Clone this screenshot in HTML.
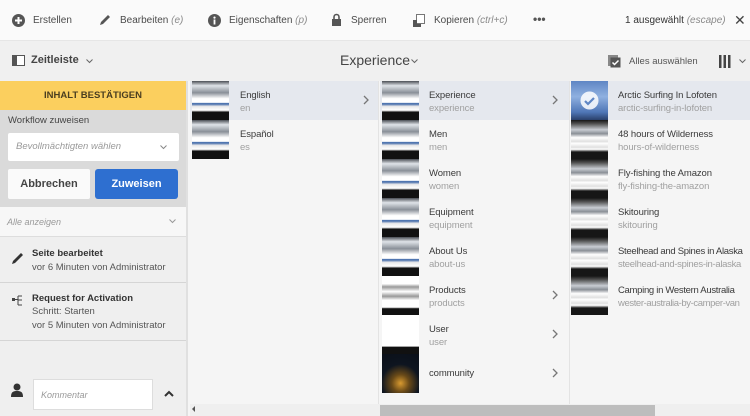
<!DOCTYPE html>
<html><head><meta charset="utf-8"><style>
*{box-sizing:border-box;margin:0;padding:0}
body{width:750px;height:416px;overflow:hidden;font-family:"Liberation Sans",sans-serif;background:#f5f5f5;position:relative;color:#4b4b4b}
.abs{position:absolute;white-space:nowrap}
.tb{left:0;top:0;width:750px;height:41px;background:#fafafa;border-bottom:1px solid #e6e6e6;font-size:10px;color:#4b4b4b}
.tb span{position:absolute;top:15px;white-space:nowrap}
.tb i{color:#8a8a8a}
.hd{left:0;top:41px;width:750px;height:40px;background:#f0f0f0;font-size:11px}
.left{left:0;top:81px;width:188px;height:335px;background:#efefef;border-right:2px solid #e0e0e0}
.col{top:81px;height:323px;background:#f5f5f5;overflow:hidden}
.row{position:absolute;left:0;width:100%;height:39px}
.row.sel{background:#e5e8ee}
.t1{position:absolute;font-size:9.5px;color:#3a3a3a;top:9px;white-space:nowrap;letter-spacing:-.1px}
.t2{position:absolute;font-size:9.5px;color:#a0a0a0;top:22px;white-space:nowrap;letter-spacing:-.1px}
.th{position:absolute;top:0;width:37px;height:39px;background:linear-gradient(#4a4e55 0,#dfe3e8 12%,#8a9098 30%,#fff 45%,#fff 55%,#2a58a0 58%,#e8e8e8 65%,#fff 75%,#111 80%,#111 100%)}
.th2{position:absolute;top:0;width:37px;height:39px;background:linear-gradient(#161616 0,#555 10%,#c8ccd2 25%,#8a8f96 35%,#fff 45%,#e0e0e0 55%,#fff 60%,#e0e0e0 70%,#fff 75%,#161616 82%,#161616 100%)}
.chev{position:absolute;top:14px}
</style></head><body>
<div class="abs tb">
 <svg class="abs" style="left:12px;top:14px" width="13" height="13"><circle cx="6.5" cy="6.5" r="6.5" fill="#555"/><path d="M6.5 3v7M3 6.5h7" stroke="#fff" stroke-width="2"/></svg>
 <span style="left:33px">Erstellen</span>
 <svg class="abs" style="left:98px;top:13px" width="14" height="14"><path d="M2 12l1-3 7-7 2 2-7 7z" fill="#555"/></svg>
 <span style="left:120px">Bearbeiten <i>(e)</i></span>
 <svg class="abs" style="left:208px;top:14px" width="13" height="13"><circle cx="6.5" cy="6.5" r="6.5" fill="#555"/><rect x="5.6" y="5.5" width="1.8" height="5" fill="#fff"/><circle cx="6.5" cy="3.6" r="1.1" fill="#fff"/></svg>
 <span style="left:229px">Eigenschaften <i>(p)</i></span>
 <svg class="abs" style="left:331px;top:13px" width="11" height="14"><path d="M3 6V4a2.5 2.5 0 015 0v2" stroke="#555" stroke-width="1.6" fill="none"/><rect x="1" y="6" width="9" height="7" fill="#555"/></svg>
 <span style="left:351px">Sperren</span>
 <svg class="abs" style="left:413px;top:14px" width="12" height="13"><rect x="3.5" y=".5" width="8" height="9" fill="#fff" stroke="#777"/><rect x="0" y="6" width="4" height="7" fill="#555"/><rect x="0" y="10" width="8" height="3" fill="#555"/></svg>
 <span style="left:434px">Kopieren <i>(ctrl+c)</i></span>
 <span style="left:533px;top:12px;font-size:12px;font-weight:bold;color:#555">•••</span>
 <span style="left:625px;color:#333">1 ausgewählt <i>(escape)</i></span>
 <span style="left:734px;top:12px;font-size:14px;color:#444">✕</span>
</div>
<div class="abs hd">
 <svg class="abs" style="left:12px;top:14px" width="13" height="11"><rect x=".5" y=".5" width="12" height="10" fill="#fff" stroke="#555"/><rect x="1" y="1" width="4" height="9" fill="#555"/></svg>
 <span class="abs" style="left:31px;top:13px;font-weight:bold;color:#444">Zeitleiste</span>
 <svg class="abs" style="left:86px;top:18px" width="7" height="5"><path d="M.5.5l3 3 3-3" stroke="#666" fill="none"/></svg>
 <span class="abs" style="left:340px;top:11px;font-size:14px;color:#444">Experience</span>
 <svg class="abs" style="left:411px;top:18px" width="7" height="5"><path d="M.5.5l3 3 3-3" stroke="#666" fill="none"/></svg>
 <svg class="abs" style="left:608px;top:14px" width="13" height="13"><rect x="0" y="0" width="10" height="11" fill="#888"/><rect x="2.5" y="2.5" width="10" height="10" fill="#555"/><path d="M4.5 7.5l2 2 4-4" stroke="#fff" stroke-width="1.5" fill="none"/></svg>
 <span class="abs" style="left:629px;top:15px;font-size:9.5px;color:#555">Alles auswählen</span>
 <svg class="abs" style="left:719px;top:14px" width="12" height="13"><rect x="0" y="0" width="2.5" height="13" fill="#444"/><rect x="4.5" y="0" width="2.5" height="13" fill="#444"/><rect x="9" y="0" width="2.5" height="13" fill="#444"/></svg>
 <svg class="abs" style="left:739px;top:18px" width="7" height="5"><path d="M.5.5l3 3 3-3" stroke="#666" fill="none"/></svg>
</div>
<div class="abs left">
 <div class="abs" style="left:0;top:0;width:186px;height:29px;background:#fbcf5e;text-align:center;font-size:9.5px;font-weight:bold;color:#4a3e20;line-height:29px">INHALT BESTÄTIGEN</div>
 <div class="abs" style="left:0;top:29px;width:186px;height:97px;background:#dadada">
  <span class="abs" style="left:8px;top:5px;font-size:9.5px;color:#444">Workflow zuweisen</span>
  <div class="abs" style="left:8px;top:23px;width:171px;height:28px;background:#fff;border-radius:2px"><span class="abs" style="left:8px;top:8px;font-size:9.5px;font-style:italic;color:#999">Bevollmächtigten wählen</span><svg class="abs" style="left:152px;top:12px" width="7" height="5"><path d="M.5.5l3 3 3-3" stroke="#888" fill="none"/></svg></div>
  <div class="abs" style="left:8px;top:59px;width:82px;height:30px;background:#fafafa;border-radius:2px;text-align:center;line-height:30px;font-size:11px;font-weight:bold;color:#444">Abbrechen</div>
  <div class="abs" style="left:95px;top:59px;width:83px;height:30px;background:#2e6fd0;border-radius:3px;text-align:center;line-height:30px;font-size:11px;font-weight:bold;color:#fff">Zuweisen</div>
 </div>
 <div class="abs" style="left:0;top:126px;width:186px;height:30px;background:#f7f7f7;border-bottom:1px solid #ddd"><span class="abs" style="left:7px;top:10px;font-size:9px;font-style:italic;color:#999">Alle anzeigen</span><svg class="abs" style="left:169px;top:12px" width="7" height="5"><path d="M.5.5l3 3 3-3" stroke="#999" fill="none"/></svg></div>
 <svg class="abs" style="left:11px;top:170px" width="14" height="14"><path d="M1 13l1-3 8-8 2 2-8 8z" fill="#333"/></svg>
 <span class="abs" style="left:32px;top:167px;font-size:9.5px;font-weight:bold;color:#333">Seite bearbeitet</span>
 <span class="abs" style="left:32px;top:181px;font-size:9.5px;color:#555">vor 6 Minuten von Administrator</span>
 <div class="abs" style="left:0;top:201px;width:186px;height:1px;background:#d5d5d5"></div>
 <svg class="abs" style="left:12px;top:214px" width="12" height="12"><rect x="0" y="3" width="3" height="3" fill="#444"/><path d="M3 4.5h3M6 1v9M6 1h4M6 5h4M6 10h4" stroke="#444" fill="none"/></svg>
 <span class="abs" style="left:32px;top:212px;font-size:9.5px;font-weight:bold;color:#333">Request for Activation</span>
 <span class="abs" style="left:32px;top:225px;font-size:9.5px;color:#555">Schritt: Starten</span>
 <span class="abs" style="left:32px;top:239px;font-size:9.5px;color:#555">vor 5 Minuten von Administrator</span>
 <div class="abs" style="left:0;top:259px;width:186px;height:1px;background:#d5d5d5"></div>
 <svg class="abs" style="left:11px;top:302px" width="12" height="14"><circle cx="6" cy="4" r="3.5" fill="#333"/><path d="M0 14c0-5 2-6 6-6s6 1 6 6z" fill="#333"/></svg>
 <div class="abs" style="left:33px;top:298px;width:120px;height:31px;background:#fff;border:1px solid #ddd"><span class="abs" style="left:7px;top:10px;font-size:9px;font-style:italic;color:#999">Kommentar</span></div>
 <svg class="abs" style="left:164px;top:309px" width="10" height="7"><path d="M1 6l4-4 4 4" stroke="#333" stroke-width="2" fill="none"/></svg>
</div>
<div class="abs col" style="left:190px;width:189px;border-right:1px solid #e3e3e3">
 <div class="row sel" style="top:0"><div class="th" style="left:2px"></div><span class="t1" style="left:50px">English</span><span class="t2" style="left:50px">en</span><svg class="chev" style="left:173px" width="6" height="10"><path d="M1 1l4 4-4 4" stroke="#777" stroke-width="1.3" fill="none"/></svg></div>
 <div class="row" style="top:39px"><div class="th" style="left:2px"></div><span class="t1" style="left:50px">Español</span><span class="t2" style="left:50px">es</span></div>
</div>
<div class="abs col" style="left:380px;width:190px;border-right:1px solid #e3e3e3">
 <div class="row sel" style="top:0"><div class="th" style="left:2px"></div><span class="t1" style="left:49px">Experience</span><span class="t2" style="left:49px">experience</span><svg class="chev" style="left:172px" width="6" height="10"><path d="M1 1l4 4-4 4" stroke="#777" stroke-width="1.3" fill="none"/></svg></div>
 <div class="row" style="top:39px"><div class="th" style="left:2px"></div><span class="t1" style="left:49px">Men</span><span class="t2" style="left:49px">men</span></div>
 <div class="row" style="top:78px"><div class="th" style="left:2px"></div><span class="t1" style="left:49px">Women</span><span class="t2" style="left:49px">women</span></div>
 <div class="row" style="top:117px"><div class="th" style="left:2px"></div><span class="t1" style="left:49px">Equipment</span><span class="t2" style="left:49px">equipment</span></div>
 <div class="row" style="top:156px"><div class="th" style="left:2px"></div><span class="t1" style="left:49px">About Us</span><span class="t2" style="left:49px">about-us</span></div>
 <div class="row" style="top:195px"><div class="th" style="left:2px;background:linear-gradient(#fff 0,#fff 20%,#999 28%,#fff 40%,#999 52%,#fff 62%,#fff 80%,#111 84%)"></div><span class="t1" style="left:49px">Products</span><span class="t2" style="left:49px">products</span><svg class="chev" style="left:172px" width="6" height="10"><path d="M1 1l4 4-4 4" stroke="#777" stroke-width="1.3" fill="none"/></svg></div>
 <div class="row" style="top:234px"><div class="th" style="left:2px;background:linear-gradient(#fff 0,#fff 80%,#111 82%)"></div><span class="t1" style="left:49px">User</span><span class="t2" style="left:49px">user</span><svg class="chev" style="left:172px" width="6" height="10"><path d="M1 1l4 4-4 4" stroke="#777" stroke-width="1.3" fill="none"/></svg></div>
 <div class="row" style="top:273px;height:40px"><div class="th" style="left:2px;height:39px;background:radial-gradient(circle at 50% 75%,#d89a30 0,#6a4a18 25%,#0e1520 55%,#0a0f18 100%)"></div><span class="t1" style="left:49px;top:14px">community</span><svg class="chev" style="left:172px;top:14px" width="6" height="10"><path d="M1 1l4 4-4 4" stroke="#777" stroke-width="1.3" fill="none"/></svg></div>
</div>
<div class="abs col" style="left:571px;width:179px">
 <div class="row sel" style="top:0"><div class="th2" style="left:0;background:linear-gradient(#5f86c4 0,#8fb0e0 40%,#4f76b6 80%,#2a3f6a 100%)"></div><svg class="abs" style="left:9px;top:10px" width="19" height="19"><circle cx="9.5" cy="9.5" r="9" fill="#fff" opacity=".85"/><path d="M5 10l3 3 6-6" stroke="#5f86c4" stroke-width="2.2" fill="none"/></svg><span class="t1" style="left:47px">Arctic Surfing In Lofoten</span><span class="t2" style="left:47px">arctic-surfing-in-lofoten</span></div>
 <div class="row" style="top:39px"><div class="th2" style="left:0"></div><span class="t1" style="left:47px">48 hours of Wilderness</span><span class="t2" style="left:47px">hours-of-wilderness</span></div>
 <div class="row" style="top:78px"><div class="th2" style="left:0"></div><span class="t1" style="left:47px">Fly-fishing the Amazon</span><span class="t2" style="left:47px">fly-fishing-the-amazon</span></div>
 <div class="row" style="top:117px"><div class="th2" style="left:0"></div><span class="t1" style="left:47px">Skitouring</span><span class="t2" style="left:47px">skitouring</span></div>
 <div class="row" style="top:156px"><div class="th2" style="left:0"></div><span class="t1" style="left:47px;letter-spacing:-.3px">Steelhead and Spines in Alaska</span><span class="t2" style="left:47px;letter-spacing:-.3px">steelhead-and-spines-in-alaska</span></div>
 <div class="row" style="top:195px"><div class="th2" style="left:0"></div><span class="t1" style="left:47px;letter-spacing:-.3px">Camping in Western Australia</span><span class="t2" style="left:47px;letter-spacing:-.4px">wester-australia-by-camper-van</span></div>
</div>
<div class="abs" style="left:190px;top:404px;width:560px;height:12px;background:#efefef"></div>
<div class="abs" style="left:380px;top:405px;width:275px;height:11px;background:#bdbdbd"></div>
<div class="abs" style="left:192px;top:406px;width:0;height:0;border-top:3px solid transparent;border-bottom:3px solid transparent;border-right:3px solid #555"></div>
</body></html>
